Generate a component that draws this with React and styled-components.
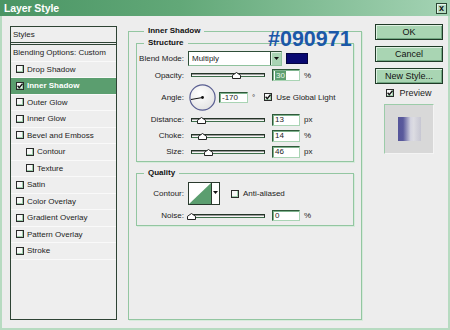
import React from 'react';
import styled, { createGlobalStyle } from 'styled-components';

const Global = createGlobalStyle`
  html, body { margin: 0; padding: 0; background: #ededed; }
  body { font-family: "Liberation Sans", Arial, sans-serif; font-size: 8px; color: #1c1c1c; }
  #root { width: 450px; height: 330px; }
`;

const Window = styled.div`
  position: relative;
  width: 450px;
  height: 330px;
  display: flex;
  flex-direction: column;
  background: #ededed;
  overflow: hidden;
`;

const TitleBar = styled.div`
  height: 16px;
  flex-shrink: 0;
  display: flex;
  align-items: center;
  justify-content: space-between;
  padding: 0 3px 0 4px;
  background: linear-gradient(to right, #4a9564 0%, #62a878 40%, #a4d3b4 100%);
`;

const Title = styled.span`
  color: #ffffff;
  font-weight: bold;
  font-size: 10.5px;
  letter-spacing: -0.1px;
`;

const CloseBtn = styled.span`
  width: 11px;
  height: 11px;
  box-sizing: border-box;
  display: flex;
  align-items: center;
  justify-content: center;
  background: #b6dcc2;
  border: 1px solid #2a4632;
  box-shadow: inset 1px 1px 0 #e6f4ea;
  color: #111;
  font-weight: bold;
  font-size: 9px;
  line-height: 1;
`;

const Body = styled.div`
  flex: 1;
  display: flex;
  align-items: flex-start;
  box-sizing: border-box;
  padding: 8px 0 0 8px;
  border: 2px solid #b7dbc1;
  border-top: none;
`;

const StylePanel = styled.div`
  width: 107px;
  height: 294px;
  margin-top: 2px;
  box-sizing: border-box;
  border: 1px solid #2e4334;
  background: #eeeeee;
  display: flex;
  flex-direction: column;
`;

const HeadRow = styled.div`
  height: 18px;
  box-sizing: border-box;
  display: flex;
  align-items: center;
  padding-left: 2px;
  border-bottom: 3px double #2e4334;
`;

const ListRow = styled.div`
  height: 16.5px;
  box-sizing: border-box;
  display: flex;
  align-items: center;
  gap: 3px;
  padding-left: ${p => (p.$indent ? 15 : p.$plain ? 2 : 5)}px;
  border-bottom: 1px solid #f9f9f9;
  background: ${p => (p.$selected ? '#5b9e6f' : 'transparent')};
  color: ${p => (p.$selected ? '#ffffff' : '#1c1c1c')};
  font-weight: ${p => (p.$selected ? 'bold' : 'normal')};
  white-space: nowrap;
`;

const Box = styled.span`
  width: 8px;
  height: 8px;
  box-sizing: border-box;
  flex-shrink: 0;
  display: inline-flex;
  align-items: center;
  justify-content: center;
  border: 1px solid #2a2a2a;
  background: #f7f7f7;
  box-shadow: inset -1px -1px 0 #9fcfac;
`;

const Check = ({ checked }) => (
  <Box>
    {checked && (
      <svg width="6" height="6" viewBox="0 0 6 6">
        <path d="M0.6 2.8 L2.3 4.7 L5.5 0.8" stroke="#111" strokeWidth="1.4" fill="none" />
      </svg>
    )}
  </Box>
);

const Middle = styled.div`
  width: 234px;
  margin-left: 11px;
  margin-top: 7px;
`;

const Group = styled.div`
  box-sizing: border-box;
  border: 1px solid #93c6a1;
  box-shadow: 1px 1px 0 #d6ebdb;
  display: flex;
  flex-direction: column;
  height: ${p => (p.$h ? `${p.$h}px` : 'auto')};
  margin-top: ${p => p.$mt || 0}px;
  padding: 0 ${p => p.$px || 0}px ${p => p.$pb || 0}px;
`;

const Legend = styled.div`
  align-self: flex-start;
  margin: -6px 0 0 ${p => p.$ml}px;
  padding: 0 4px;
  line-height: 10px;
  font-weight: bold;
  font-size: 8px;
  background: #ededed;
  color: #111;
`;

const Rows = styled.div`
  display: flex;
  flex-direction: column;
  gap: 3px;
  margin-top: ${p => p.$mt}px;
`;

const Row = styled.div`
  display: flex;
  align-items: center;
  height: ${p => p.$h}px;
  margin-top: ${p => p.$mt || 0}px;
`;

const Label = styled.span`
  width: 47px;
  text-align: right;
  margin-right: 4px;
  flex-shrink: 0;
  white-space: nowrap;
`;

const Select = styled.div`
  width: 94px;
  height: 15px;
  box-sizing: border-box;
  display: flex;
  border: 1px solid #2f4e38;
  border-right-color: #8fc29d;
  border-bottom-color: #8fc29d;
  background: #fff;
`;

const SelectText = styled.span`
  flex: 1;
  padding-left: 3px;
  display: flex;
  align-items: center;
`;

const SelectArrow = styled.span`
  width: 10px;
  display: flex;
  align-items: center;
  justify-content: center;
  background: #a9d4b4;
  border-left: 1px solid #2f4e38;
  box-shadow: inset 1px 1px 0 #e0f1e4;
`;

const Swatch = styled.span`
  width: 22px;
  height: 11px;
  margin-left: 4px;
  background: ${p => p.$color};
  box-shadow: inset 0 0 0 1px #050540;
`;

const SliderWrap = styled.div`
  position: relative;
  width: 80px;
  height: 10px;
  margin-left: ${p => p.$ml || 0}px;
  display: flex;
  align-items: center;
  flex-shrink: 0;
`;

const Track = styled.div`
  flex: 1;
  margin: 0 3px;
  height: 4px;
  box-sizing: border-box;
  border: 1px solid #243428;
  border-bottom-color: #3f6f4c;
  background: #f5f5f5;
  box-shadow: inset 0 1px 0 #9a9a9a;
`;

const Thumb = styled.svg`
  position: absolute;
  top: 2px;
`;

const Slider = ({ pos, ml }) => (
  <SliderWrap $ml={ml}>
    <Track />
    <Thumb width="9" height="7" viewBox="0 0 9 7" style={{ left: `${pos}px` }}>
      <polygon points="0.5,6.5 0.5,3.3 4.5,0.5 8.5,3.3 8.5,6.5" fill="#fff" stroke="#222" strokeWidth="1" />
    </Thumb>
  </SliderWrap>
);

const Field = styled.span`
  width: ${p => p.$w || 28}px;
  height: ${p => p.$hh || 12}px;
  box-sizing: border-box;
  margin-left: ${p => p.$ml || 4}px;
  display: flex;
  align-items: center;
  padding-left: 2px;
  background: #fff;
  border: 1px solid #2f5a3a;
  border-right-color: #a9d4b4;
  border-bottom-color: #a9d4b4;
  box-shadow: inset 1px 1px 0 #7fb28e;
  flex-shrink: 0;
`;

const Selected = styled.span`
  background: #5f9f70;
  color: #e9f5ec;
  padding: 0 1px;
`;

const Unit = styled.span`
  margin-left: ${p => p.$ml || 4}px;
`;

const CheckLabel = styled.span`
  display: flex;
  align-items: center;
  height: 10px;
  gap: ${p => p.$gap || 3}px;
  margin-left: ${p => p.$ml || 0}px;
  margin-top: ${p => p.$mt || 0}px;
  white-space: nowrap;
  font-size: ${p => p.$fs || 8}px;
`;

const Dial = styled.svg`
  margin-left: 1px;
  flex-shrink: 0;
`;

const ContourPick = styled.div`
  display: flex;
  height: 23px;
  box-sizing: border-box;
  border: 1px solid #2a3a2e;
  background: #fff;
`;

const ContourArrow = styled.span`
  width: 8px;
  display: flex;
  justify-content: center;
  padding-top: 8px;
  box-sizing: border-box;
  border-left: 1px solid #2a3a2e;
`;

const RightCol = styled.div`
  width: 68px;
  margin-left: 13px;
  display: flex;
  flex-direction: column;
  align-items: center;
`;

const Button = styled.div`
  width: 68px;
  height: 16px;
  box-sizing: border-box;
  margin-bottom: 6px;
  display: flex;
  align-items: center;
  justify-content: center;
  background: #a9d5b3;
  border: 1px solid #1f3a27;
  box-shadow: inset 1px 1px 0 #dff1e3, inset -1px -1px 0 #72a782;
  font-size: 9px;
  color: #111;
`;

const PreviewBox = styled.div`
  width: 50px;
  height: 50px;
  margin-top: 6px;
  box-sizing: border-box;
  display: flex;
  align-items: center;
  justify-content: center;
  background: #d8d8d8;
  border: 1px solid #f4f4f4;
  border-top-color: #9ccca9;
  border-left-color: #9ccca9;
`;

const PreviewSwatch = styled.div`
  width: 23px;
  height: 24px;
  background: linear-gradient(to right, #55559a 0%, #5a5a9c 22%, #9494bc 38%, #d4d4e0 55%, #dcdce2 68%, #c6c6d2 100%);
`;

const Annotation = styled.div`
  position: absolute;
  left: 268px;
  top: 28px;
  font-family: "Liberation Sans", Arial, sans-serif;
  font-weight: bold;
  font-size: 21.5px;
  line-height: 22px;
  color: #1b58a8;
`;

const Arrow = () => (
  <svg width="5" height="3" viewBox="0 0 5 3">
    <polygon points="0,0 5,0 2.5,3" fill="#111" />
  </svg>
);

const items = [
  { t: 'Drop Shadow' },
  { t: 'Inner Shadow', sel: true },
  { t: 'Outer Glow' },
  { t: 'Inner Glow' },
  { t: 'Bevel and Emboss' },
  { t: 'Contour', indent: true },
  { t: 'Texture', indent: true },
  { t: 'Satin' },
  { t: 'Color Overlay' },
  { t: 'Gradient Overlay' },
  { t: 'Pattern Overlay' },
  { t: 'Stroke' },
];

export default function App() {
  return (
    <>
      <Global />
      <Window>
        <TitleBar>
          <Title>Layer Style</Title>
          <CloseBtn>x</CloseBtn>
        </TitleBar>
        <Body>
          <StylePanel>
            <HeadRow>Styles</HeadRow>
            <ListRow $plain>Blending Options: Custom</ListRow>
            {items.map(it => (
              <ListRow key={it.t} $indent={it.indent} $selected={it.sel}>
                <Check checked={it.sel} />
                {it.t}
              </ListRow>
            ))}
          </StylePanel>

          <Middle>
            <Group $h={289} $px={7}>
              <Legend $ml={8}>Inner Shadow</Legend>
              <Group $mt={7} $pb={3}>
                <Legend $ml={7}>Structure</Legend>
                <Rows $mt={3}>
                  <Row $h={15}>
                    <Label>Blend Mode:</Label>
                    <Select>
                      <SelectText>Multiply</SelectText>
                      <SelectArrow><Arrow /></SelectArrow>
                    </Select>
                    <Swatch $color="#090971" />
                  </Row>
                  <Row $h={12}>
                    <Label>Opacity:</Label>
                    <Slider pos={43.5} />
                    <Field><Selected>30</Selected></Field>
                    <Unit>%</Unit>
                  </Row>
                  <Row $h={26}>
                    <Label>Angle:</Label>
                    <Dial width="27" height="27" viewBox="0 0 27 27">
                      <defs>
                        <radialGradient id="dialg" cx="40%" cy="35%" r="70%">
                          <stop offset="0%" stopColor="#ffffff" />
                          <stop offset="100%" stopColor="#e2e2e2" />
                        </radialGradient>
                      </defs>
                      <circle cx="13.5" cy="13.5" r="12.6" fill="url(#dialg)" stroke="#5a5f92" strokeWidth="1.2" />
                      <line x1="13.5" y1="13.5" x2="2" y2="15.5" stroke="#111" strokeWidth="1" />
                      <circle cx="13.5" cy="13.5" r="1.4" fill="#111" />
                    </Dial>
                    <Field $w={29} $hh={11} $ml={3}>-170</Field>
                    <Unit $ml={4}>°</Unit>
                    <CheckLabel $ml={9} $gap={4}>
                      <Check checked />
                      Use Global Light
                    </CheckLabel>
                  </Row>
                  <Row $h={13}>
                    <Label>Distance:</Label>
                    <Slider pos={8.5} />
                    <Field>13</Field>
                    <Unit>px</Unit>
                  </Row>
                  <Row $h={13}>
                    <Label>Choke:</Label>
                    <Slider pos={9.5} />
                    <Field>14</Field>
                    <Unit>%</Unit>
                  </Row>
                  <Row $h={13}>
                    <Label>Size:</Label>
                    <Slider pos={15.5} />
                    <Field>46</Field>
                    <Unit>px</Unit>
                  </Row>
                </Rows>
              </Group>

              <Group $mt={11} $pb={4}>
                <Legend $ml={7}>Quality</Legend>
                <Row $h={23} $mt={4}>
                  <Label>Contour:</Label>
                  <ContourPick>
                    <svg width="22" height="21" viewBox="0 0 22 21">
                      <polygon points="0,21 22,0 22,21" fill="#5b9e6f" />
                    </svg>
                    <ContourArrow><Arrow /></ContourArrow>
                  </ContourPick>
                  <CheckLabel $ml={11} $gap={4}>
                    <Check />
                    Anti-aliased
                  </CheckLabel>
                </Row>
                <Row $h={11} $mt={5}>
                  <Label>Noise:</Label>
                  <Slider pos={-1.5} />
                  <Field $hh={11}>0</Field>
                  <Unit>%</Unit>
                </Row>
              </Group>
            </Group>
          </Middle>

          <RightCol>
            <Button>OK</Button>
            <Button>Cancel</Button>
            <Button>New Style...</Button>
            <CheckLabel $gap={5} $fs={9} $mt={-2}>
              <Check checked />
              Preview
            </CheckLabel>
            <PreviewBox>
              <PreviewSwatch />
            </PreviewBox>
          </RightCol>
        </Body>
        <Annotation>#090971</Annotation>
      </Window>
    </>
  );
}
